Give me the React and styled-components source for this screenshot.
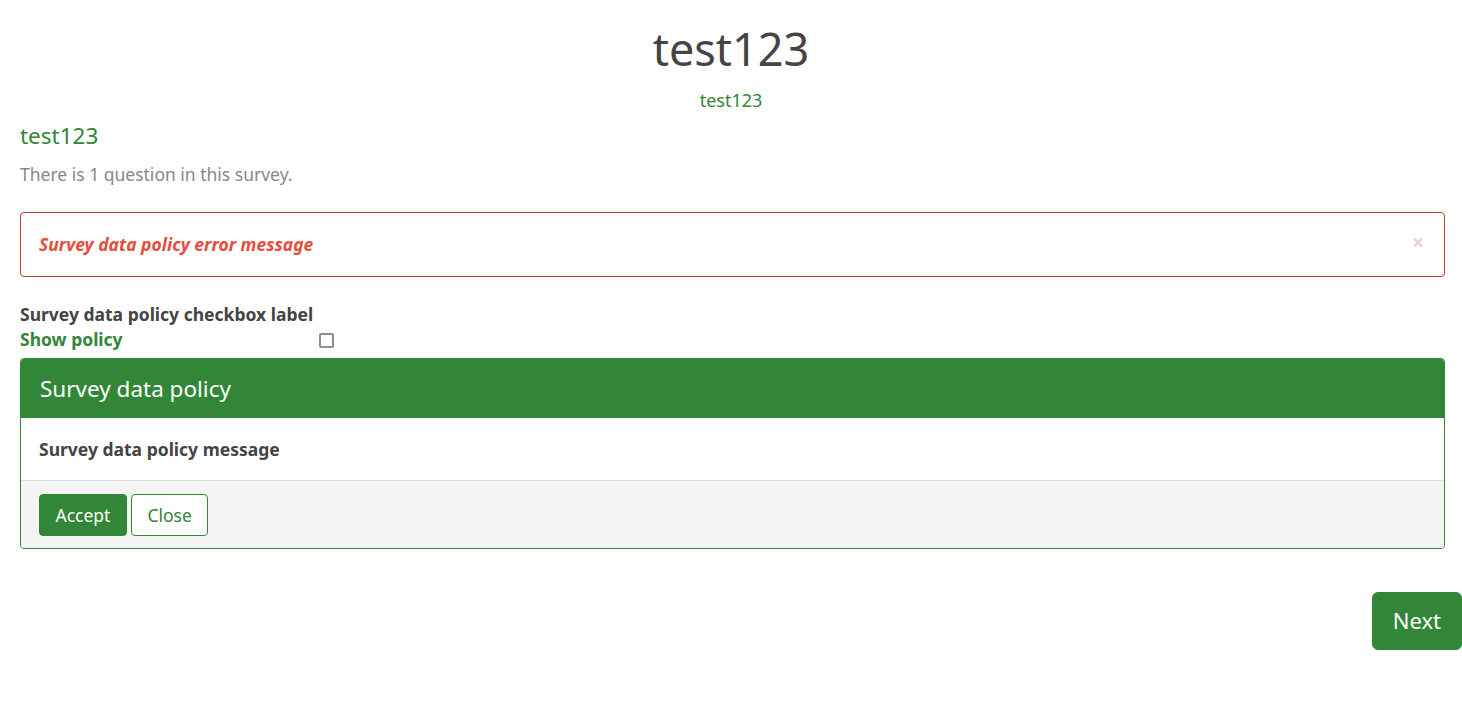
import React from "react";
import styled, { createGlobalStyle } from "styled-components";

const GREEN = "#328637";

const Global = createGlobalStyle`
  html, body { margin: 0; padding: 0; background: #fff; }
  body { font-family: "Noto Sans", "Open Sans", sans-serif; color: #444; }
  * { box-sizing: border-box; }
`;

const Page = styled.div`
  width: 1462px;
  padding: 22px 0 40px;
`;

const Header = styled.header`
  display: flex;
  flex-direction: column;
  align-items: center;
`;

const Title = styled.h1`
  margin: 0;
  font-size: 45px;
  font-weight: 400;
  line-height: 53px;
  color: #444;
`;

const SubTitle = styled.div`
  margin-top: 13px;
  font-size: 18px;
  line-height: 25px;
  color: ${GREEN};
`;

const Content = styled.main`
  padding: 0 17px 0 20px;
`;

const GroupTitle = styled.h2`
  margin: 10px 0 0;
  font-size: 22.5px;
  font-weight: 400;
  line-height: 26px;
  color: ${GREEN};
`;

const Description = styled.p`
  margin: 12px 0 0;
  font-size: 17.5px;
  line-height: 26px;
  color: #888;
`;

const ErrorBox = styled.div`
  margin-top: 25px;
  display: flex;
  align-items: center;
  justify-content: space-between;
  border: 1px solid #c0392b;
  border-radius: 4px;
  padding: 18px 20px 19px 18px;
`;

const ErrorText = styled.span`
  font-size: 17.5px;
  line-height: 26px;
  font-weight: 700;
  font-style: italic;
  color: #e74c3c;
`;

const Dismiss = styled.span`
  font-size: 21px;
  line-height: 24px;
  font-weight: 700;
  color: #ecd0d0;
  margin-top: -4px;
`;

const CheckRow = styled.div`
  margin-top: 25px;
  display: grid;
  grid-template-columns: 299px auto;
  grid-template-rows: 25px 25px;
  align-items: center;
`;

const CheckLabel = styled.label`
  grid-column: 1 / 3;
  font-size: 17.5px;
  font-weight: 700;
  line-height: 25px;
  color: #444;
`;

const ShowPolicy = styled.a`
  font-size: 17.5px;
  font-weight: 700;
  line-height: 25px;
  color: ${GREEN};
  text-decoration: none;
  cursor: pointer;
`;

const Box = styled.span`
  display: block;
  width: 15px;
  height: 15px;
  border: 2px solid #8b8b9b;
  border-radius: 2px;
  margin-top: 2px;
`;

const Panel = styled.section`
  margin-top: 6px;
  border: 1px solid ${GREEN};
  border-radius: 4px;
  overflow: hidden;
`;

const PanelHead = styled.div`
  background: ${GREEN};
  color: #fff;
  font-size: 22.5px;
  line-height: 27px;
  padding: 16px 19px;
`;

const PanelBody = styled.div`
  padding: 18px 18px;
  font-size: 17.5px;
  font-weight: 700;
  line-height: 26px;
  color: #444;
`;

const PanelFoot = styled.div`
  background: #f4f4f4;
  border-top: 1px solid #ddd;
  padding: 13px 18px 12px;
  display: flex;
  gap: 4px;
`;

const Button = styled.button`
  font-family: inherit;
  font-size: ${(p) => (p.$big ? "22px" : "17.5px")};
  line-height: ${(p) => (p.$big ? "27px" : "24px")};
  padding: ${(p) => (p.$big ? "14px 20px 15px" : "8px 15.5px")};
  border-radius: ${(p) => (p.$big ? "6px" : "4px")};
  border: 1px solid ${GREEN};
  background: ${(p) => (p.$outline ? "#fff" : GREEN)};
  color: ${(p) => (p.$outline ? GREEN : "#fff")};
  cursor: pointer;
`;

const NavRow = styled.div`
  margin-top: 43px;
  display: flex;
  justify-content: flex-end;
`;

export default function App() {
  return (
    <>
      <Global />
      <Page>
        <Header>
          <Title>test123</Title>
          <SubTitle>test123</SubTitle>
        </Header>
        <Content>
          <GroupTitle>test123</GroupTitle>
          <Description>There is 1 question in this survey.</Description>
          <ErrorBox>
            <ErrorText>Survey data policy error message</ErrorText>
            <Dismiss>×</Dismiss>
          </ErrorBox>
          <CheckRow>
            <CheckLabel>Survey data policy checkbox label</CheckLabel>
            <ShowPolicy>Show policy</ShowPolicy>
            <Box />
          </CheckRow>
          <Panel>
            <PanelHead>Survey data policy</PanelHead>
            <PanelBody>Survey data policy message</PanelBody>
            <PanelFoot>
              <Button>Accept</Button>
              <Button $outline>Close</Button>
            </PanelFoot>
          </Panel>
        </Content>
        <NavRow>
          <Button $big>Next</Button>
        </NavRow>
      </Page>
    </>
  );
}
